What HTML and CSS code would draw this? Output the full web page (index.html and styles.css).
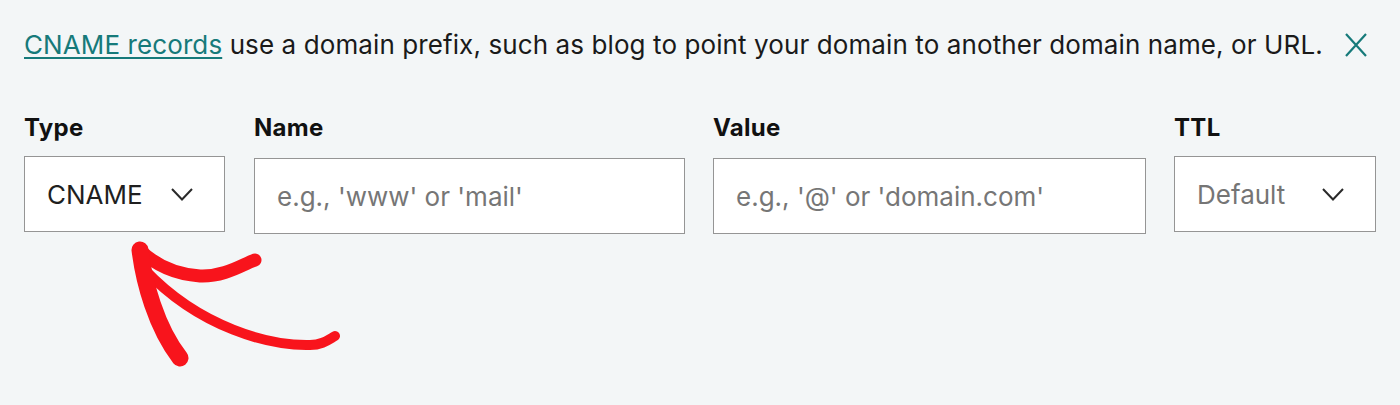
FILE: index.html
```html
<!DOCTYPE html>
<html lang="en">
<head>
<meta charset="utf-8">
<title>CNAME record</title>
<link rel="stylesheet" href="styles.css">
</head>
<body>
<div class="page">
  <div class="notice">
    <p class="notice-text"><a class="notice-link" href="#">CNAME records</a> use a domain prefix, such as blog to point your domain to another domain name, or URL.</p>
    <button class="close" aria-label="Close">
      <svg width="24" height="24" viewBox="0 0 24 24"><path d="M2 1 L22 23 M22 1 L2 23" fill="none" stroke="currentColor" stroke-width="2.2"/></svg>
    </button>
  </div>
  <div class="fields">
    <div class="field field-type">
      <label class="label">Type</label>
      <div class="box select"><span class="value">CNAME</span>
        <svg class="chev" width="22" height="13" viewBox="0 0 22 13"><path d="M1 1 L11 11.5 L21 1" fill="none" stroke="currentColor" stroke-width="2"/></svg>
      </div>
    </div>
    <div class="field field-name">
      <label class="label">Name</label>
      <input class="box input" type="text" placeholder="e.g., 'www' or 'mail'">
    </div>
    <div class="field field-value">
      <label class="label">Value</label>
      <input class="box input" type="text" placeholder="e.g., '@' or 'domain.com'">
    </div>
    <div class="field field-ttl">
      <label class="label">TTL</label>
      <div class="box select"><span class="value muted">Default</span>
        <svg class="chev" width="22" height="13" viewBox="0 0 22 13"><path d="M1 1 L11 11.5 L21 1" fill="none" stroke="currentColor" stroke-width="2"/></svg>
      </div>
    </div>
  </div>
  <svg class="arrow" width="260" height="150" viewBox="0 0 260 150">
    <g fill="none" stroke="#f8141c" stroke-linecap="round" stroke-linejoin="round">
      <path d="M235 104 C 228 108, 222 113, 210 113 C 170 114, 100 96, 45 38" stroke-width="10"/>
      <path d="M40 18 C 52 30, 72 42, 100 44 C 125 45, 143 32, 155 28" stroke-width="13"/>
      <path d="M40 18 C 44 50, 56 95, 80 126" stroke-width="17"/>
    </g>
  </svg>
</div>
</body>
</html>
```

FILE: styles.css
```css
* { box-sizing: border-box; }
html, body { margin: 0; padding: 0; }
body {
  background: #f3f6f7;
  font-family: Inter, Roboto, "Liberation Sans", Arial, sans-serif;
  color: #111111;
}
.page {
  position: relative;
  width: 1400px;
  height: 405px;
  padding: 25px 24px 0 24px;
}
.notice {
  display: flex;
  align-items: center;
  gap: 21px;
}
.notice-text {
  margin: 0;
  font-size: 26px;
  line-height: 39px;
  letter-spacing: 0.1px;
  color: #1a1a1a;
}
.notice-link {
  color: #167a7a;
  text-decoration: underline;
  text-underline-offset: 3px;
  text-decoration-thickness: 1.5px;
}
.close {
  border: 0;
  background: none;
  padding: 0;
  margin: 0;
  color: #167a7a;
  display: flex;
  width: 24px;
  height: 24px;
}
.fields {
  display: flex;
  gap: 28px;
  margin-top: 47px;
}
.field {
  display: flex;
  flex-direction: column;
}
.field-type { width: 201px; margin-right: 1px; }
.field-name { width: 431px; }
.field-value { width: 433px; }
.field-ttl { width: 202px; }
.label {
  font-size: 24px;
  font-weight: 700;
  line-height: 33px;
  letter-spacing: 0.3px;
  color: #111111;
  margin-bottom: 12px;
}
.box {
  height: 76px;
  border: 1px solid #959595;
  background: #ffffff;
}
.select {
  display: flex;
  align-items: center;
  justify-content: space-between;
  padding: 0 31px 0 22px;
  font-size: 26px;
  color: #1f1f1f;
}
.select .muted { color: #757575; }
.chev { color: #2a2a2a; }
.input {
  margin-top: 2px;
  width: 100%;
  padding: 0 22px;
  font-family: Inter, Roboto, "Liberation Sans", Arial, sans-serif;
  font-size: 26px;
  color: #1f1f1f;
  outline: none;
}
.input::placeholder { color: #767676; }
.arrow {
  position: absolute;
  left: 100px;
  top: 232px;
}
```
